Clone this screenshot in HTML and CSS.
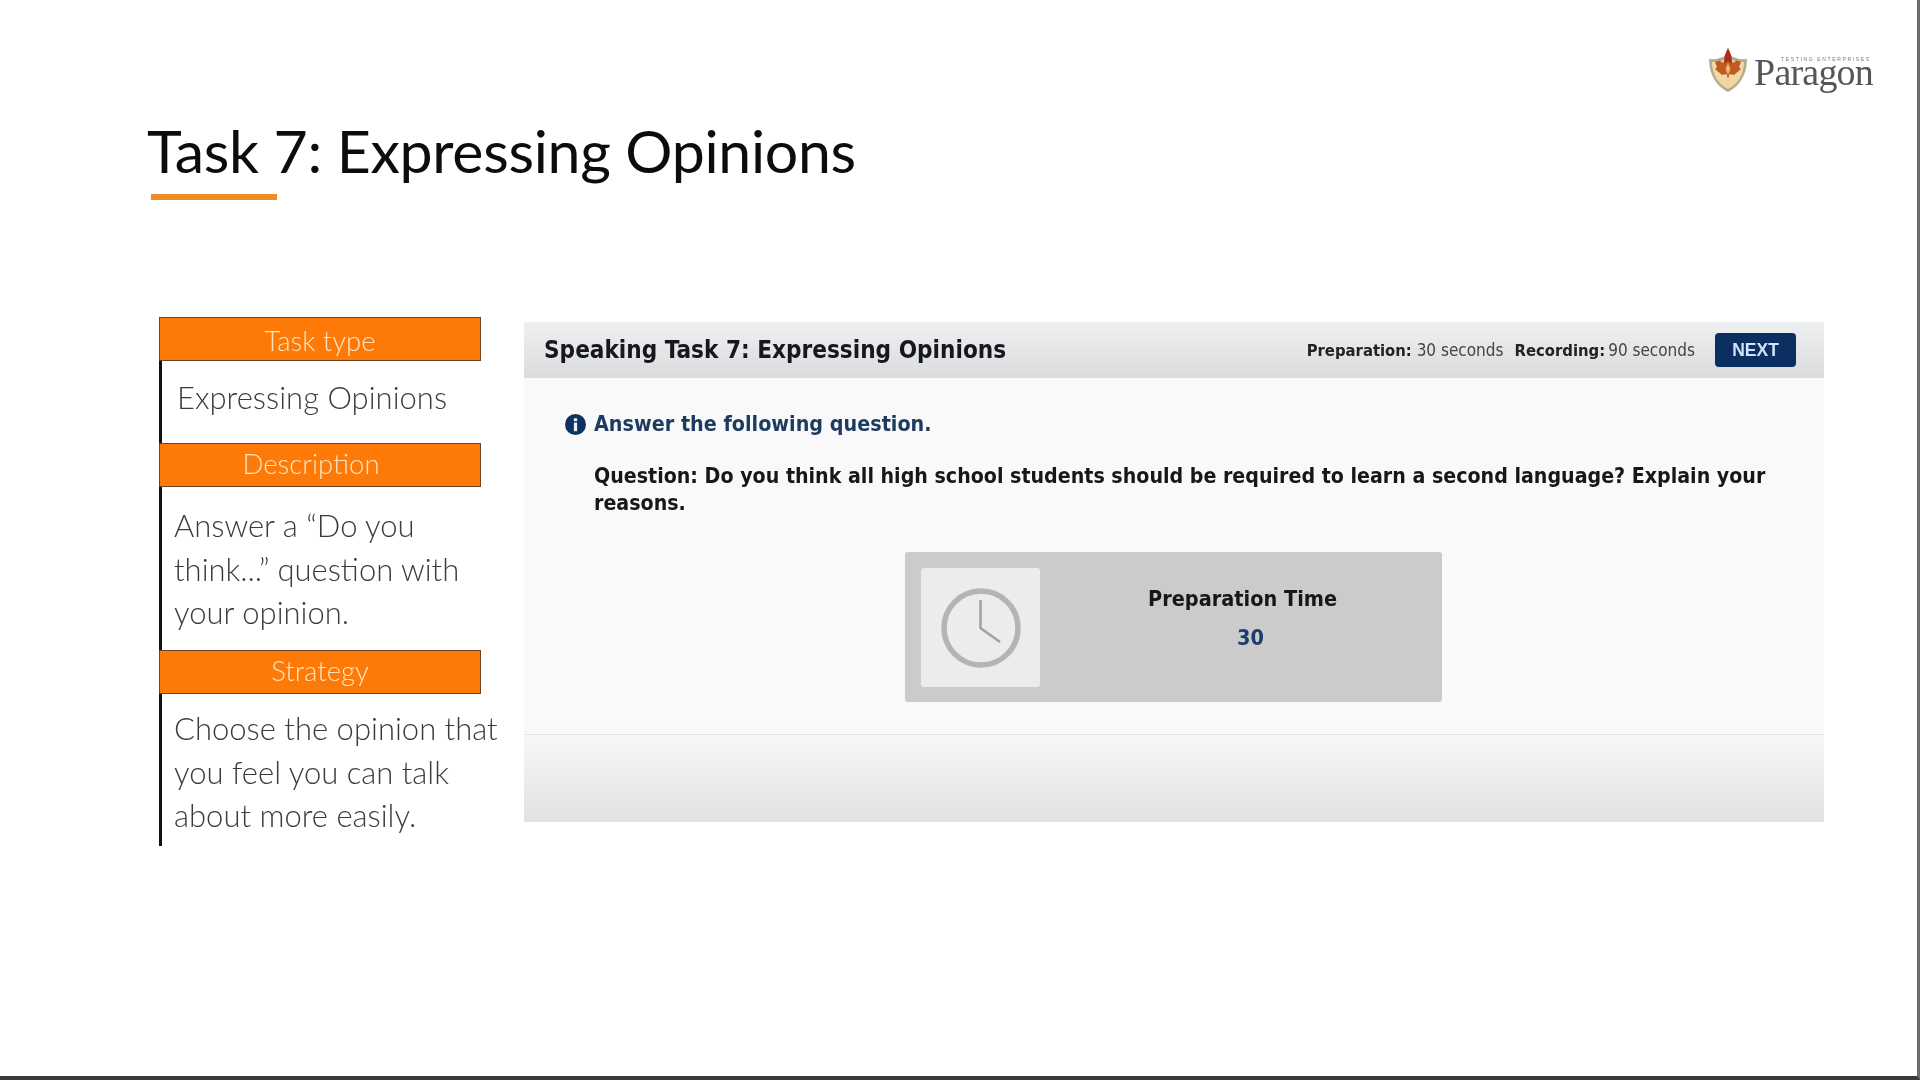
FILE: index.html
```html
<!DOCTYPE html>
<html lang="en">
<head>
<meta charset="utf-8">
<title>Task 7: Expressing Opinions</title>
<link rel="stylesheet" href="styles.css">
</head>
<body>
<div class="slide">
  <header class="top">
    <div class="heading">
      <h1 class="title">Task 7: Expressing Opinions</h1>
      <div class="rule"></div>
    </div>
    <div class="logo">
      <svg class="shield" viewBox="0 0 40 46" width="40" height="46" aria-hidden="true">
        <defs>
          <linearGradient id="sh" x1="0" y1="0" x2="0" y2="1">
            <stop offset="0" stop-color="#f3dcb4"/>
            <stop offset="1" stop-color="#efd49a"/>
          </linearGradient>
        </defs>
        <path d="M1 12 C8 13 14 11 20 7 C26 11 32 13 39 12 C39 27 32 39 20 45 C8 39 1 27 1 12 Z" fill="#b5ab8f"/>
        <path d="M4 15 C10 15.500 15 14 20 11 C25 14 30 15.500 36 15 C36 27 30 37 20 42 C10 37 4 27 4 15 Z" fill="url(#sh)"/>
        <path d="M20 1 L23 8 L24.500 16 L29 13.500 L33 15 L31 20 L33 22 L26 28 L21.500 27 L20 32 L18.500 27 L14 28 L7 22 L9 20 L7 15 L11 13.500 L15.500 16 L17 8 Z" fill="#c2591f"/>
        <path d="M20 1 L23 8 L24 17 L20 14 L16 17 L17 8 Z" fill="#ab2e1c"/>
        <path d="M20 16 L22.500 22 L20 28 L17.500 22 Z" fill="#f0b277"/>
      </svg>
      <div class="wordmark">
        <span class="tag">TESTING ENTERPRISES</span>
        <span class="name">Paragon</span>
      </div>
    </div>
  </header>

  <main class="content">
    <aside class="side">
      <div class="bar bar-first">Task type</div>
      <div class="copy copy-type">Expressing Opinions</div>
      <div class="bar bar-shift">Description</div>
      <div class="copy copy-desc">Answer a “Do you<br>think...” question with<br>your opinion.</div>
      <div class="bar">Strategy</div>
      <div class="copy copy-strat">Choose the opinion that<br>you feel you can talk<br>about more easily.</div>
    </aside>

    <section class="panel">
      <div class="panel-head">
        <h2 class="panel-title">Speaking Task 7: Expressing Opinions</h2>
        <div class="meta">
          <span class="meta-item"><b>Preparation:</b> 30 seconds</span>
          <span class="meta-item"><b>Recording:</b><span class="tight">90 seconds</span></span>
          <span class="next">NEXT</span>
        </div>
      </div>
      <div class="panel-body">
        <p class="instruction">
          <svg class="info" viewBox="0 0 22 22" width="21" height="21" aria-hidden="true">
            <circle cx="11" cy="11" r="11" fill="#0f3263"/>
            <rect x="9.300" y="9" width="3.400" height="9" fill="#eef2f7"/>
            <rect x="9.300" y="4.500" width="3.400" height="3" fill="#eef2f7"/>
          </svg>
          <span>Answer the following question.</span>
        </p>
        <p class="question">Question: Do you think all high school students should be required to learn a second language? Explain your reasons.</p>
        <div class="timer">
          <div class="clock-tile">
            <svg viewBox="0 0 84 84" width="84" height="84" aria-hidden="true">
              <circle cx="42" cy="42" r="37" fill="none" stroke="#b4b4b4" stroke-width="5.500"/>
              <path d="M41.500 14 V42 L61 56" fill="none" stroke="#a4a4a4" stroke-width="2.600"/>
            </svg>
          </div>
          <div class="timer-text">
            <div class="timer-label">Preparation Time</div>
            <div class="timer-value">30</div>
          </div>
        </div>
      </div>
      <div class="panel-foot"></div>
    </section>
  </main>
</div>
</body>
</html>
```

FILE: styles.css
```css
* { box-sizing: border-box; }
html, body { margin: 0; padding: 0; background: #fff; }
.slide {
  width: 1920px;
  height: 1080px;
  overflow: hidden;
  background: #fff;
  border-right: 3px solid #6b6b6b;
  border-bottom: 4px solid #3a3a3a;
  filter: blur(0.45px);
  display: flex;
  flex-direction: column;
}
.top {
  height: 317px;
  display: flex;
  justify-content: space-between;
  align-items: flex-start;
  padding: 47px 44px 0 147px;
  flex: none;
}
.heading { padding-top: 68px; }
.title {
  margin: 0;
  font: 400 59px/72px "Lato", sans-serif;
  letter-spacing: -0.3px;
  color: #0c0c0c;
}
.rule {
  width: 126px;
  height: 6px;
  margin: 7px 0 0 4px;
  background: #f08a24;
}
.logo { display: flex; align-items: flex-start; gap: 6px; }
.wordmark {
  display: flex;
  flex-direction: column;
  padding-top: 9px;
}
.tag {
  font: 400 5px/6px "Liberation Sans", sans-serif;
  letter-spacing: 1.650px;
  color: #777;
  padding-left: 27px;
  white-space: nowrap;
}
.name {
  margin-top: -4px;
  font: 400 38px/28px "Liberation Serif", serif;
  letter-spacing: -0.8px;
  color: #55565a;
}
.content {
  display: flex;
  gap: 43px;
  padding-left: 159px;
  align-items: flex-start;
}
.side { width: 322px; flex: none; }
.bar {
  height: 44px;
  background: #fd7a08;
  border: 1px solid #6e4524;
  color: #ffe3bd;
  font: 300 27.500px/40px "Lato", sans-serif;
  text-align: center;
}
.bar-first { padding-top: 3px; }
.bar-shift { padding-right: 18px; }
.copy {
  border-left: 3px solid #111;
  color: #3b3b3b;
  font: 300 31px/43.500px "Lato", sans-serif;
  white-space: nowrap;
}
.copy-type { height: 82px; padding: 15px 0 0 15px; }
.copy-desc { height: 163px; padding: 17px 0 0 12px; }
.copy-strat { height: 152px; padding: 13px 0 0 12px; }
.panel {
  width: 1300px;
  height: 500px;
  margin-top: 5px;
  flex: none;
  display: flex;
  flex-direction: column;
  background: #f9f9f9;
}
.panel-head {
  height: 56px;
  flex: none;
  display: flex;
  align-items: center;
  justify-content: space-between;
  padding: 0 28px 0 20px;
  background: linear-gradient(#eff0f1, #d9dbdd);
}
.panel-title {
  margin: 0;
  font: 700 24.100px/30px "DejaVu Sans", sans-serif;
  font-stretch: condensed;
  color: #16181c;
}
.meta {
  display: flex;
  align-items: center;
  gap: 11px;
  font: 400 17px/24px "DejaVu Sans", sans-serif;
  font-stretch: condensed;
  color: #444;
}
.meta b { color: #222; font-size: 16.500px; }
.tight { margin-left: 3px; }
.next {
  width: 81px;
  height: 34px;
  margin-left: 9px;
  border-radius: 4px;
  background: #0a2f60;
  color: #cfe4fb;
  font: 700 17.500px/34px "Liberation Sans", sans-serif;
  text-align: center;
}
.panel-body { flex: 1; padding: 32px 30px 0 41px; }
.instruction {
  margin: 0;
  display: flex;
  align-items: center;
  gap: 8px;
  font: 700 21.350px/28px "DejaVu Sans", sans-serif;
  font-stretch: condensed;
  color: #1d3a5f;
}
.question {
  margin: 23.500px 0 0 29px;
  font: 700 21.200px/27px "DejaVu Sans", sans-serif;
  font-stretch: condensed;
  color: #15171a;
}
.timer {
  width: 537px;
  height: 150px;
  margin: 36.500px 0 0 340px;
  padding: 16px;
  display: flex;
  border-radius: 3px;
  background: #cbcbcb;
}
.clock-tile {
  width: 119px;
  height: 119px;
  flex: none;
  display: flex;
  align-items: center;
  justify-content: center;
  border-radius: 3px;
  background: #ececec;
}
.timer-text {
  flex: 1;
  padding: 16px 0 0 19px;
  text-align: center;
  font: 700 21.500px/30px "DejaVu Sans", sans-serif;
  font-stretch: condensed;
  color: #15171a;
}
.timer-value { margin: 9px 0 0 16px; color: #1f3c6e; }
.panel-foot {
  height: 88px;
  flex: none;
  border-top: 1px solid #e4e5e6;
  background: linear-gradient(#f6f7f7, #dfe1e3);
}
```
